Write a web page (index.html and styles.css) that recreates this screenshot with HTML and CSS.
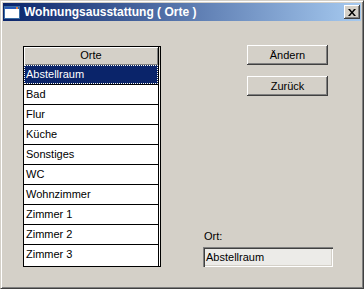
FILE: index.html
```html
<!DOCTYPE html>
<html>
<head>
<meta charset="utf-8">
<link rel="stylesheet" href="styles.css">
</head>
<body>
<div class="window">
  <div class="titlebar">
    <svg class="app-icon" width="16" height="13" viewBox="0 0 16 13">
      <rect x="0.5" y="0.5" width="15" height="12" fill="#fff" stroke="#3a6ea5"/>
      <rect x="1" y="1" width="14" height="2" fill="#2a5ab8"/>
      <rect x="12" y="1" width="2" height="2" fill="#e08040"/>
    </svg>
    <span class="title">Wohnungsausstattung ( Orte )</span>
    <button class="close" type="button">
      <svg width="8" height="7" viewBox="0 0 8 7"><path d="M0 0h2l2 2.5L6 0h2L5 3.5 8 7H6L4 4.5 2 7H0l3-3.5z" fill="#000"/></svg>
    </button>
  </div>
  <div class="client">
    <div class="list">
      <div class="list-inner">
        <div class="col">
          <div class="header">Orte</div>
          <div class="row selected"><span class="focus">Abstellraum</span></div>
          <div class="row">Bad</div>
          <div class="row">Flur</div>
          <div class="row">Küche</div>
          <div class="row">Sonstiges</div>
          <div class="row">WC</div>
          <div class="row">Wohnzimmer</div>
          <div class="row">Zimmer 1</div>
          <div class="row">Zimmer 2</div>
          <div class="row">Zimmer 3</div>
        </div>
        <div class="col-gap"><div class="gap-head"></div></div>
      </div>
    </div>
    <div class="side">
      <button class="btn" type="button">Ändern</button>
      <button class="btn second" type="button">Zurück</button>
      <div class="spacer"></div>
      <div class="label">Ort:</div>
      <div class="field">Abstellraum</div>
    </div>
  </div>
</div>
</body>
</html>
```

FILE: styles.css
```css
html, body {
  margin: 0;
  padding: 0;
  background: #d4d0c8;
}
body {
  font-family: "Liberation Sans", Arial, sans-serif;
  font-size: 11px;
  color: #000;
}
.window {
  width: 364px;
  height: 289px;
  box-sizing: border-box;
  background: #d4d0c8;
  border-top: 1px solid #d4d0c8;
  border-left: 1px solid #d4d0c8;
  border-right: 1px solid #404040;
  border-bottom: 1px solid #404040;
  box-shadow: inset 1px 1px 0 #fff, inset -1px -1px 0 #808080;
  display: flex;
  flex-direction: column;
}
.titlebar {
  height: 18px;
  margin: 2px 2px 0 2px;
  display: flex;
  align-items: center;
  background: linear-gradient(to right, #0a246a, #a6caf0);
  color: #fff;
}
.app-icon {
  margin-left: 1px;
  margin-right: 4px;
  flex: none;
}
.title {
  font-weight: bold;
  font-size: 12px;
  white-space: nowrap;
  flex: 1;
}
.close {
  width: 16px;
  height: 14px;
  margin-right: 1px;
  padding: 0;
  background: #d4d0c8;
  border: none;
  box-shadow: inset -1px -1px 0 #404040, inset 1px 1px 0 #fff, inset -2px -2px 0 #808080;
  display: flex;
  align-items: center;
  justify-content: center;
}
.client {
  flex: 1;
  display: flex;
  padding: 24px 0 0 22px;
  margin: 0 1px 1px 0;
}
.list {
  margin-top: 1px;
  width: 138px;
  height: 221px;
  box-sizing: border-box;
  border: 1px solid #000;
  background: #fff;
  flex: none;
}
.list-inner {
  display: flex;
  height: 100%;
}
.col {
  width: 135px;
  box-sizing: border-box;
  border-right: 1px solid #000;
  height: 100%;
  overflow: hidden;
}
.col-gap {
  flex: 1;
}
.gap-head {
  height: 18px;
  background: #d4d0c8;
}
.header {
  height: 18px;
  box-sizing: border-box;
  background: #d4d0c8;
  text-align: center;
  line-height: 17px;
  box-shadow: inset 1px 1px 0 #fff, inset -1px -1px 0 #808080;
}
.row {
  height: 20px;
  box-sizing: border-box;
  border-top: 1px solid #000;
  line-height: 19px;
  padding-left: 2px;
  white-space: nowrap;
}
.header + .row {
  border-top: none;
  height: 19px;
}
.row.selected {
  background: #0a246a;
  color: #fff;
  padding: 0;
}
.focus {
  display: block;
  height: 100%;
  box-sizing: border-box;
  border: 1px dotted #fffff0;
  padding-left: 1px;
  line-height: 17px;
}
.side {
  margin-left: 42px;
  width: 130px;
  display: flex;
  flex-direction: column;
  padding-bottom: 20px;
}
.btn {
  margin-left: 44px;
  width: 81px;
  height: 20px;
  padding: 0;
  font-family: "Liberation Sans", Arial, sans-serif;
  font-size: 11px;
  color: #000;
  background: #d4d0c8;
  border: none;
  box-shadow: inset -1px -1px 0 #404040, inset 1px 1px 0 #fff, inset -2px -2px 0 #808080;
}
.second {
  margin-top: 11px;
}
.spacer {
  flex: 1;
}
.label {
  padding-left: 1px;
  margin-bottom: 5px;
}
.field {
  height: 20px;
  box-sizing: border-box;
  background: #ecebe8;
  line-height: 20px;
  padding-left: 3px;
  box-shadow: inset 1px 1px 0 #808080, inset 2px 2px 0 #404040, inset -1px -1px 0 #fff, inset -2px -2px 0 #d4d0c8;
}
```
